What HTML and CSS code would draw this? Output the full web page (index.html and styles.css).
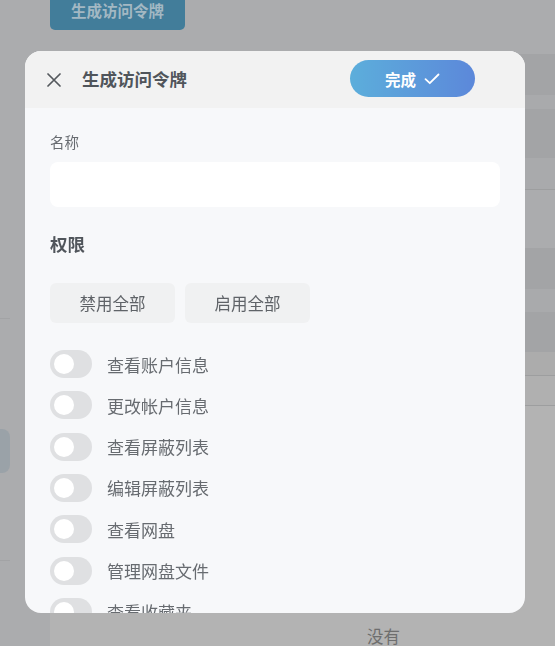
FILE: index.html
```html
<!DOCTYPE html>
<html lang="zh">
<head>
<meta charset="utf-8">
<link rel="stylesheet" href="styles.css">
</head>
<body>
<div class="page">
  <div class="side">
    <div class="side-line l1"></div>
    <div class="side-item"></div>
    <div class="side-line l2"></div>
  </div>
  <div class="main">
    <div class="gen-btn">生成访问令牌</div>
    <div class="table">
      <div class="r dark h41"></div>
      <div class="r light h14"></div>
      <div class="r dark h49"></div>
      <div class="r light h32 bb"></div>
      <div class="r bg h58"></div>
      <div class="r dark h41"></div>
      <div class="r light h23"></div>
      <div class="r dark h40"></div>
      <div class="r lighter h23 bb"></div>
      <div class="r light2 h30 bb"></div>
      <div class="r empty">没有</div>
    </div>
  </div>
</div>

<div class="modal">
  <div class="modal-head">
    <svg class="close" width="14" height="14" viewBox="0 0 14 14"><path d="M1 1L13 13M13 1L1 13" stroke="#55595e" stroke-width="1.7" stroke-linecap="round"/></svg>
    <div class="title">生成访问令牌</div>
    <div class="done">完成
      <svg width="16" height="12" viewBox="0 0 16 12"><path d="M1.5 6.2L5.8 10.2L14.5 1.5" fill="none" stroke="#fff" stroke-width="1.8" stroke-linecap="round" stroke-linejoin="round"/></svg>
    </div>
  </div>
  <div class="modal-body">
    <div class="label">名称</div>
    <div class="input"></div>
    <div class="section">权限</div>
    <div class="btns">
      <div class="btn">禁用全部</div>
      <div class="btn">启用全部</div>
    </div>
    <div class="list">
      <div class="item"><span class="toggle"></span><span>查看账户信息</span></div>
      <div class="item"><span class="toggle"></span><span>更改帐户信息</span></div>
      <div class="item"><span class="toggle"></span><span>查看屏蔽列表</span></div>
      <div class="item"><span class="toggle"></span><span>编辑屏蔽列表</span></div>
      <div class="item"><span class="toggle"></span><span>查看网盘</span></div>
      <div class="item"><span class="toggle"></span><span>管理网盘文件</span></div>
      <div class="item"><span class="toggle"></span><span>查看收藏夹</span></div>
      <div class="item"><span class="toggle"></span><span>管理收藏夹</span></div>
    </div>
  </div>
</div>
</body>
</html>
```

FILE: styles.css
```css
html, body {
  margin: 0;
  padding: 0;
  height: 100%;
  overflow: hidden;
}
body {
  background: #abacae;
  font-family: "Noto Sans CJK SC", "Noto Sans", sans-serif;
}
.page {
  display: flex;
  height: 646px;
}
.side {
  width: 10px;
  flex: none;
  display: flex;
  flex-direction: column;
}
.side-line {
  height: 1px;
  background: #a2a3a5;
}
.l1 { margin-top: 318px; }
.side-item {
  margin-top: 110px;
  height: 44px;
  background: #9aa2a8;
  border-radius: 0 8px 8px 0;
}
.l2 { margin-top: 87px; }
.main {
  margin-left: 40px;
  flex: 1;
  display: flex;
  flex-direction: column;
}
.gen-btn {
  width: 135px;
  height: 30px;
  background: #427d9a;
  border-radius: 0 0 5px 5px;
  color: #a3b8c3;
  font-size: 15.5px;
  font-weight: 700;
  display: flex;
  align-items: center;
  justify-content: center;
  line-height: 1;
  padding-bottom: 9px;
  box-sizing: border-box;
}
.table {
  margin-top: 24px;
  display: flex;
  flex-direction: column;
  flex: 1;
}
.r { flex: none; }
.dark { background: #a3a4a6; }
.light { background: #a9aaac; }
.bg { background: #abacae; }
.lighter { background: #acacac; }
.light2 { background: #b0b0b0; }
.bb { border-bottom: 1px solid #9d9e9f; }
.h41 { height: 41px; }
.h14 { height: 14px; }
.h49 { height: 49px; }
.h32 { height: 31px; }
.h58 { height: 58px; }
.h23 { height: 23px; }
.h40 { height: 40px; }
.h30 { height: 29px; }
.empty {
  flex: 1;
  background: #b3b3b3;
  color: #6e6e6e;
  font-size: 16.5px;
  display: flex;
  align-items: flex-end;
  justify-content: center;
  line-height: 22px;
  padding-left: 162px;
  margin-bottom: -1px;
}
.modal {
  position: fixed;
  left: 25px;
  top: 51px;
  width: 500px;
  height: 562px;
  border-radius: 16px;
  overflow: hidden;
  background: #f7f8fa;
  display: flex;
  flex-direction: column;
}
.modal-head {
  height: 57px;
  flex: none;
  background: #f2f2f2;
  display: flex;
  align-items: center;
  padding-left: 22px;
  padding-right: 50px;
}
.close { flex: none; }
.title {
  margin-left: 21px;
  font-size: 17.5px;
  font-weight: 700;
  color: #50555b;
  margin-top: -2px;
}
.done {
  margin-left: auto;
  width: 125px;
  height: 37px;
  border-radius: 19px;
  background: linear-gradient(90deg, #5caedb, #5c88da);
  color: #fff;
  font-size: 15.5px;
  font-weight: 700;
  display: flex;
  align-items: center;
  justify-content: center;
  gap: 8px;
  margin-top: -2px;
}
.modal-body {
  padding: 24px 25px 0;
  display: flex;
  flex-direction: column;
}
.label {
  font-size: 14.5px;
  line-height: 20px;
  color: #676b70;
}
.input {
  margin-top: 10px;
  height: 45px;
  background: #fff;
  border-radius: 8px;
}
.section {
  margin-top: 25px;
  font-size: 17.5px;
  line-height: 24px;
  font-weight: 700;
  color: #50555b;
}
.btns {
  margin-top: 27px;
  display: flex;
  gap: 10px;
}
.btn {
  width: 125px;
  height: 40px;
  border-radius: 6px;
  background: #f0f1f2;
  color: #5f6368;
  font-size: 16.5px;
  display: flex;
  align-items: center;
  justify-content: center;
}
.list {
  margin-top: 27px;
  display: flex;
  flex-direction: column;
  gap: 13.33px;
}
.item {
  display: flex;
  align-items: center;
  gap: 15px;
  height: 28px;
  font-size: 17px;
  color: #676b70;
}
.toggle {
  flex: none;
  width: 42px;
  height: 28px;
  border-radius: 14px;
  background: #dfe0e2;
  position: relative;
}
.toggle::after {
  content: "";
  position: absolute;
  left: 4px;
  top: 4px;
  width: 20px;
  height: 20px;
  border-radius: 50%;
  background: #fff;
}
```
